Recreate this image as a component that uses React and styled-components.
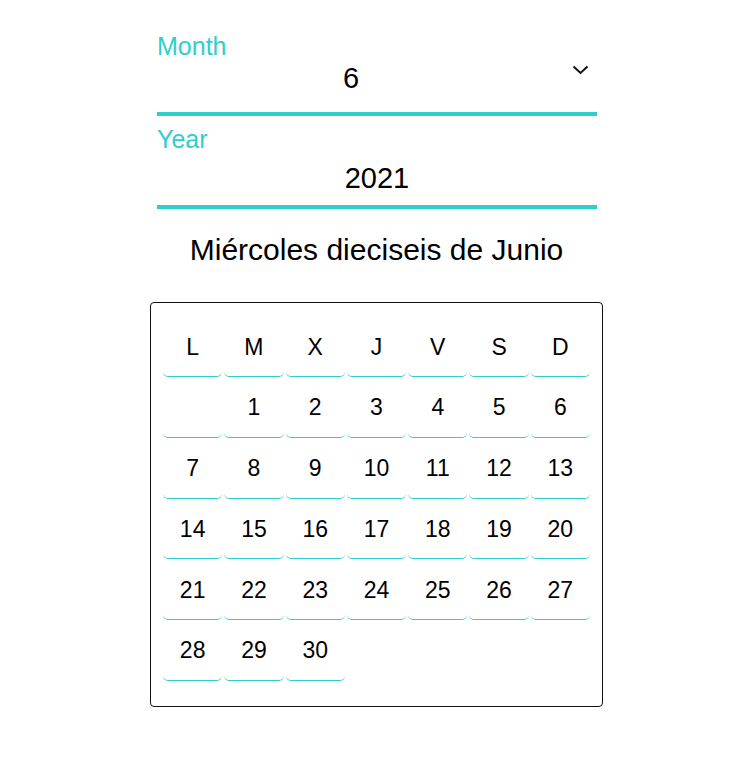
import React from "react";
import styled, { createGlobalStyle } from "styled-components";

const teal = "#30cdcd";

const GlobalStyle = createGlobalStyle`
  body {
    margin: 0;
    font-family: "Liberation Sans", Arial, sans-serif;
    color: #000;
    background: #fff;
  }
`;

const Page = styled.div`
  width: 742px;
  min-height: 766px;
  padding-top: 32px;
  box-sizing: border-box;
`;

const Column = styled.div`
  width: 453px;
  margin-left: 150px;
  display: flex;
  flex-direction: column;
`;

const Field = styled.div`
  margin: ${(p) => p.$top || 0}px 6px 0 7px;
  display: flex;
  flex-direction: column;
`;

const Label = styled.label`
  color: ${teal};
  font-size: 25px;
  line-height: 28px;
`;

const Control = styled.div`
  position: relative;
  margin-top: ${(p) => p.$gap}px;
  padding-bottom: ${(p) => p.$pad}px;
  padding-right: ${(p) => (p.$select ? 52 : 0)}px;
  border-bottom: 4px solid ${teal};
  font-size: 29px;
  line-height: 34px;
  text-align: center;
`;

const Chevron = styled.svg`
  position: absolute;
  right: 8px;
  top: 4px;
  width: 17px;
  height: 10px;
`;

const Title = styled.h2`
  margin: 24px 0 0;
  font-size: 30px;
  font-weight: normal;
  line-height: 34px;
  text-align: center;
`;

const Calendar = styled.div`
  margin-top: 35px;
  border: 1px solid #111;
  border-radius: 4px;
  padding: 15px 0 25px 12px;
`;

const Grid = styled.div`
  width: 427px;
  display: grid;
  grid-template-columns: repeat(7, 1fr);
  grid-auto-rows: 59px;
  gap: 1.8px 2px;
`;

const Cell = styled.div`
  display: flex;
  align-items: center;
  justify-content: center;
  font-size: 23px;
  border-bottom: 1px solid ${teal};
  border-radius: 5px;
  box-sizing: border-box;
`;

const weekDays = ["L", "M", "X", "J", "V", "S", "D"];

export default function App() {
  const days = [<Cell key="blank" />];
  for (let d = 1; d <= 30; d++) days.push(<Cell key={d}>{d}</Cell>);

  return (
    <Page>
      <GlobalStyle />
      <Column>
        <Field>
          <Label>Month</Label>
          <Control $gap={1} $pad={17} $select>
            6
            <Chevron viewBox="0 0 17 10">
              <polyline points="1.5,1.5 8.5,8 15.5,1.5" fill="none" stroke="#111" strokeWidth="2" />
            </Chevron>
          </Control>
        </Field>
        <Field $top={9}>
          <Label>Year</Label>
          <Control $gap={8} $pad={10}>2021</Control>
        </Field>
        <Title>Miércoles dieciseis de Junio</Title>
        <Calendar>
          <Grid>
            {weekDays.map((w) => (
              <Cell key={w}>{w}</Cell>
            ))}
            {days}
          </Grid>
        </Calendar>
      </Column>
    </Page>
  );
}
